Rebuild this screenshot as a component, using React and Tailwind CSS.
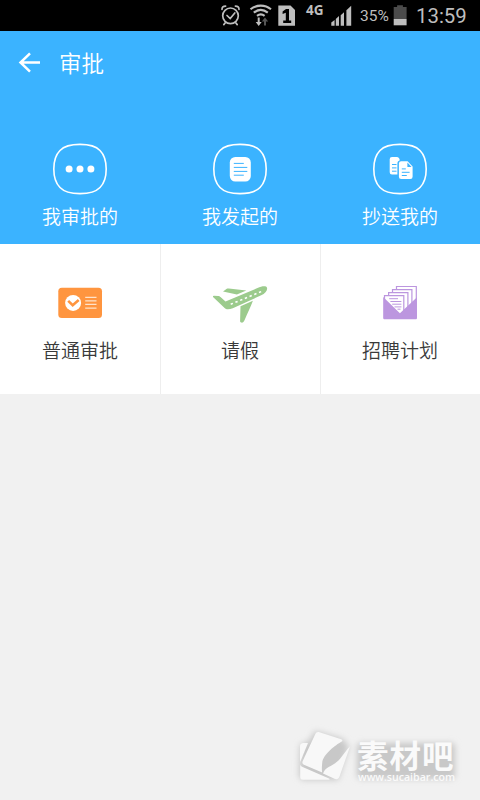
import React from 'react';

const StatusBar = () => (
    <div className="relative h-[31px] bg-black text-[#bebebe] font-[Roboto,sans-serif]">
        <svg width="480" height="31" viewBox="0 0 480 31" fill="none">
            {/* Alarm */}
            <g stroke="#bebebe" strokeWidth="1.7" strokeLinecap="round">
                <circle cx="230.5" cy="15.8" r="7.8" />
                <path d="M227 15.5l3.2 3 4.6-5.5M222 9.3c0-2 1.5-3.2 3.6-3.2M239 9.3c0-2-1.5-3.2-3.6-3.2M225.3 22.8l-1.5 1.8M235.7 22.8l1.5 1.8" />
            </g>
            {/* Wifi */}
            <g stroke="#bebebe" strokeWidth="2.1">
                <path d="M250.5 9.2c6-4.8 14.5-4.8 20.5 0M253.8 12.6c4.3-3.4 9.7-3.4 14 0M257 15.8c2.3-1.8 5.3-1.8 7.6 0" />
            </g>
            <path d="M257.7 17.5h2v4.5h2l-3 4-3-4h2z" fill="#bebebe" />
            <path d="M264 25.5h2v-4h2.2l-3.2-4-3.2 4h2.2z" fill="#555" />
            {/* Sim card */}
            <path d="M278.3 5.5h12.2l4.5 4.5v15.8h-16.7z" fill="#bebebe" />
            <path d="M286 9h3v11.5h2.2V23h-8v-2.5h2.6v-7.7l-3.2 1.2v-2.6z" fill="#000" />
            {/* Signal */}
            <path d="M331.3 25.7v-3.3l3.3-2.4v5.7zM335.8 25.7v-6.8l3.2-2.8v9.6zM340.7 25.7V15.2l3.3-3v13.5z" fill="#bebebe" />
            <path d="M346.4 25.7V10.2l4.8-4.4v19.9z" fill="#bebebe" />
            {/* Battery */}
            <path d="M393.7 7h3.4V5.3h5.8V7h3.7v12h-12.9z" fill="#4b4b4b" />
            <path d="M393.7 19h12.9v6.3h-12.9z" fill="#bebebe" />
        </svg>
        <span className="absolute left-[306px] top-[3px] text-[13.5px] leading-[15px] font-bold font-['Open_Sans',sans-serif]">4G</span>
        <span className="absolute left-[360px] top-[7px] text-[15.5px] leading-[18px]">35%</span>
        <span className="absolute left-[416px] top-[4px] text-[20.4px] leading-[25px]">13:59</span>
    </div>
);

const Squircle = ({ children }) => (
    <svg width="54" height="52" viewBox="0 0 54 52" fill="none">
        <path
            d="M27 1.4C36 1.4 42.5 2.8 47 7.5C51.5 12 53.2 18 53.2 26C53.2 34 51.5 40 47 44.5C42.5 49.2 36 50.6 27 50.6C18 50.6 11.5 49.2 7 44.5C2.5 40 .8 34 .8 26C.8 18 2.5 12 7 7.5C11.5 2.8 18 1.4 27 1.4Z"
            stroke="#fff"
            strokeWidth="1.6"
        />
        {children}
    </svg>
);

const PendingIcon = () => (
    <Squircle>
        <g fill="#fff">
            <circle cx="16.1" cy="26" r="3.5" />
            <circle cx="27" cy="26" r="3.5" />
            <circle cx="37.9" cy="26" r="3.5" />
        </g>
    </Squircle>
);

const StartedIcon = () => (
    <Squircle>
        <rect x="16.8" y="14" width="21" height="24.5" rx="5.5" fill="#fff" />
        <path d="M20.8 20.4h10M20.8 24.4h13.5M20.8 28.4h13.5M20.8 32.2h10" stroke="#3bb3ff" strokeWidth="1" />
    </Squircle>
);

const CopiedIcon = () => (
    <Squircle>
        <path d="M19 14h4.6c2.2 0 3.4 2 3 3.6-1.5.4-2.2 1.5-2.2 3v11H19a2.3 2.3 0 0 1-2.3-2.3v-13A2.3 2.3 0 0 1 19 14z" fill="#fff" />
        <path d="M19 21.5h4.5M19 24.9h4.5M19 28.2h4.5" stroke="#3bb3ff" strokeWidth="1" />
        <path
            d="M28.2 18.2h6.4l5 5.4v10.2a2.3 2.3 0 0 1-2.3 2.3h-9.1a2.3 2.3 0 0 1-2.3-2.3V20.5a2.3 2.3 0 0 1 2.3-2.3z"
            fill="#fff"
        />
        <path d="M34.4 19.6v4.4h4.2z" fill="#3bb3ff" />
        <path d="M28.8 25.9h4M28.8 29.3h7.8M28.8 32.5h5" stroke="#3bb3ff" strokeWidth="1" />
    </Squircle>
);

const ApprovalIcon = () => (
    <svg width="60" height="50" viewBox="0 0 60 50" fill="none">
        <rect x="8.3" y="9.7" width="43.7" height="30.3" rx="3.5" fill="#ff953f" />
        <circle cx="23.1" cy="24.9" r="8" fill="#fff" />
        <path d="M18.2 22.9l4.5 4.4 6-5.3" stroke="#ff953f" strokeWidth="2.6" />
        <path d="M35.2 19.3h11.3M35.2 22.8h11.3M35.2 26.4h11.3M35.2 30.2h11.3" stroke="#ffe3ca" strokeWidth="1.3" />
    </svg>
);

const PlaneIcon = () => (
    <svg width="60" height="50" viewBox="0 0 60 50" fill="none">
        <g fill="#9ccb8d">
            <path d="M3.3 19.3c-.7-.9-.4-1.5.6-1.5l4.4.1c1 0 1.5.4 2.2 1.1l5 4.5L47.5 10c4.6-2 8.8-2.3 9.5-.2.7 2.5-1.7 5.6-5.8 7.5L22.8 30.2c-4 1.6-6.8 1.4-8.2-.3z" />
            <path d="M13 13.4l3.4-2.4c.9-.5 1.4-.6 2.4-.5l17.5 2-9.4 4z" />
            <path d="M30.5 28.2l12.4-5.4c-2.5 6.4-5 11.8-8.4 19.5-.8 1.8-1.6 2.5-3.2 2.3-.9-.1-1.2-.6-1.2-1.5z" />
        </g>
        <path d="M20.7 26.3L53.4 12.7" stroke="#fff" strokeWidth="1.6" strokeDasharray="2.4 2.7" />
    </svg>
);

const RecruitIcon = () => (
    <svg width="60" height="50" viewBox="0 0 60 50" fill="none">
        <g fill="#fff" stroke="#bc96df" strokeWidth="1.2">
            <path d="M26.5 8.5h19.8v27H26.5z" />
            <path d="M22.5 11.6h19.4v24H22.5z" />
            <path d="M18.6 14.6h19.3v22H18.6z" />
            <path d="M14.5 17.7h19.3v22H14.5z" />
        </g>
        <path d="M19.2 20.7H28M20.4 23.5h11M22.2 26.2h9.2M24.5 28.9h6.9M27.5 31.2h3" stroke="#bc96df" strokeWidth="1" />
        <path d="M13.2 19l16.7 16.3 17.1-16v20.5c0 1-.5 1.5-1.5 1.5H14.7c-1 0-1.5-.5-1.5-1.5z" fill="#bc96df" />
    </svg>
);

const Watermark = () => (
    <div className="absolute left-[290px] top-[715px] w-[180px] h-[80px] text-[#fafafa]">
        <svg className="absolute inset-0" width="180" height="80" viewBox="0 0 180 80">
            <defs>
                <filter id="soft" x="-20%" y="-30%" width="140%" height="160%">
                    <feGaussianBlur stdDeviation="3" />
                </filter>
            </defs>
            <g fill="#c8c8c8" filter="url(#soft)">
                <path d="M10 30l9-4 6-10 28 8 6 8-11 33H12l-3-4z" />
                <rect x="67" y="28" width="98" height="36" rx="4" />
            </g>
            <g fill="#f8f8f8">
                <path d="M13.5 28H18l-6.8 16.5L10 47V31.5c0-2.2 1.2-3.5 3.5-3.5z" />
                <path d="M10.2 50l1.3 1.6L39 63.5c1 .5.8 1.3-.5 1.3H13c-2 0-2.8-1-2.8-3z" />
                <path d="M29.5 17.2L50.5 24c2.2.8 2.5 1.8.8 2.8C46 30 33 39 32.2 48c-.4 3.5-.5 6.5 0 9.5L14.5 50c-2-1-2.6-2-1.8-4l12.5-26.8c1-2 2.2-2.6 4.3-2z" />
                <path d="M60 31.5L49.5 61.5c-1 2.5-2.5 3.2-5 2.3L33 58.5c2-5.5 6.5-6.5 11-9.5 8-5.2 8-9.5 16-17.5z" />
            </g>
        </svg>
        <div className="relative flex flex-col pl-[67px] pt-[26px] whitespace-nowrap">
            <span className="text-[31.5px] leading-[30px] h-[29px] tracking-[1px] font-bold -translate-y-0.5 font-['Noto_Sans_CJK_SC',sans-serif]">素材吧</span>
            <span className="pl-px text-[10.6px] leading-[14px] font-semibold font-['Open_Sans',sans-serif]">www.sucaibar.com</span>
        </div>
    </div>
);

const tabs = [
    { label: '我审批的', Icon: PendingIcon },
    { label: '我发起的', Icon: StartedIcon },
    { label: '抄送我的', Icon: CopiedIcon },
];

const forms = [
    { label: '普通审批', Icon: ApprovalIcon },
    { label: '请假', Icon: PlaneIcon },
    { label: '招聘计划', Icon: RecruitIcon },
];

const App = () => {
    return (
        <div className="relative w-[480px] h-[800px] overflow-hidden bg-[#f1f1f1] font-['Noto_Sans_CJK_SC',sans-serif]">
            <StatusBar />

            <div className="h-[213px] bg-[#3bb3ff] text-white">
                <header className="flex items-center h-16 pl-[18px]">
                    <svg width="24" height="22" viewBox="0 0 24 22" fill="none" stroke="#fff" strokeWidth="2.5">
                        <path d="M22 10.5H3M12 1.3L2.5 10.5l9.5 9.2" />
                    </svg>
                    <h1 className="ml-[17px] mb-[2px] text-[22.5px] leading-[32px] font-[350]">审批</h1>
                </header>
                <div className="grid grid-cols-3 pt-12">
                    {tabs.map(({ label, Icon }) => (
                        <button key={label} className="flex flex-col items-center">
                            <Icon />
                            <span className="mt-[7px] text-[19px] leading-[28px] font-[350]">{label}</span>
                        </button>
                    ))}
                </div>
            </div>

            <div className="grid grid-cols-3 h-[150px] bg-white text-[#3a3a3a]">
                {forms.map(({ label, Icon }) => (
                    <button key={label} className="flex flex-col items-center pt-[34px] not-first:shadow-[inset_1px_0_#eeeeee]">
                        <Icon />
                        <span className="mt-2 text-[19px] leading-[28px] font-[350]">{label}</span>
                    </button>
                ))}
            </div>

            <Watermark />
        </div>
    );
};

export default App;
